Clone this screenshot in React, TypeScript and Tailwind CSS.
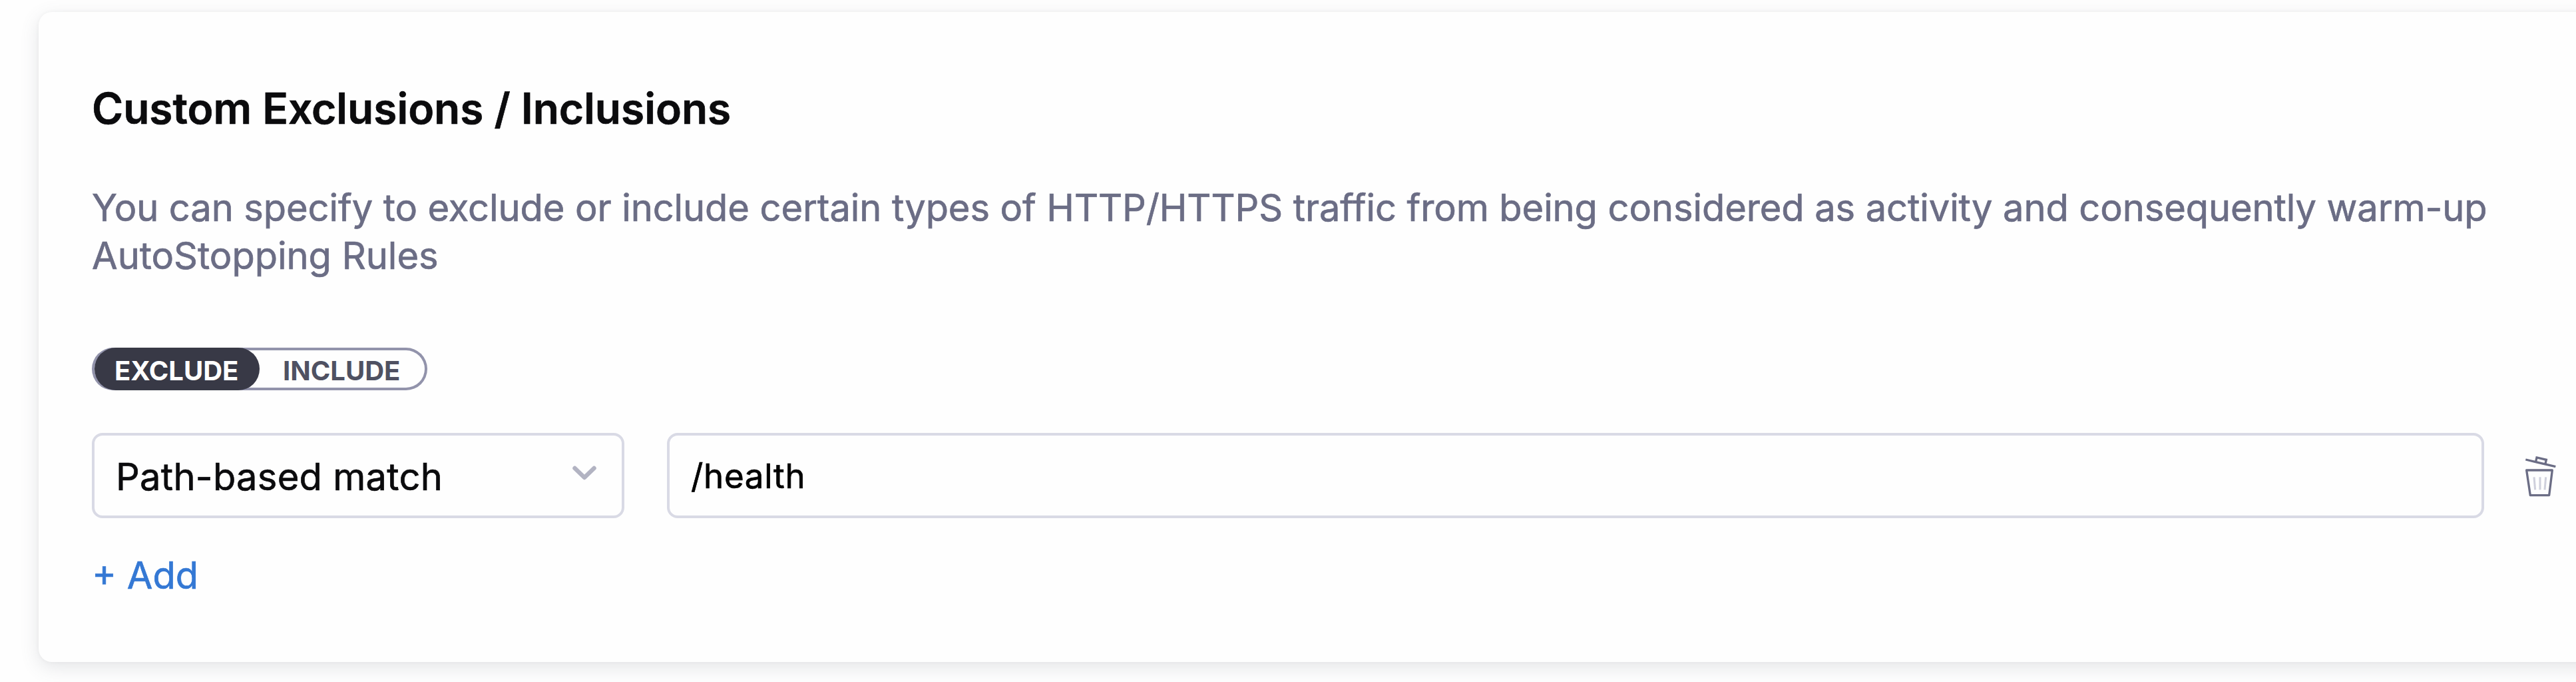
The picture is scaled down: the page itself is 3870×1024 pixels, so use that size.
function ChevronDown() {
  return (
    <svg className="-mt-[8px] h-[28px] w-[44px] shrink-0" viewBox="0 0 44 28" fill="none">
      <path d="M7.5 7 22 21 36.500 7" stroke="#b2b3c2" strokeWidth="6.500" strokeLinecap="round" strokeLinejoin="round" />
    </svg>
  );
}

function TrashIcon() {
  return (
    <svg className="h-[90px] w-[80px]" viewBox="0 0 240 270" fill="none">
      <g stroke="#6b6d85" strokeWidth="10" strokeLinejoin="round">
        <path d="M43 60 178 92" />
        <path d="M89 69 93 51 136 61 132 79" strokeLinejoin="miter" />
        <path d="M47 108H163L149 221H64Z" />
      </g>
      <g stroke="#cfd0dc" strokeWidth="9">
        <path d="M81 139 86 196" />
        <path d="M108 139V196" />
        <path d="M134 139 129 196" />
      </g>
    </svg>
  );
}

export default function App() {
  return (
    <main className="h-[1024px] w-full overflow-hidden bg-[#fefefe] pt-[18px] pl-[58px] font-[Inter,sans-serif] text-[#0b0b0d] [-webkit-text-stroke:0.7px_currentColor]">
      <section className="-mr-16 h-[976px] rounded-[20px] bg-[#fefefe] pt-[105px] pl-20 shadow-[0_0_6px_rgba(40,41,61,0.04),0_8px_28px_rgba(96,97,112,0.16)]">
        <h2 className="text-[64px] leading-[80px] font-semibold whitespace-nowrap">Custom Exclusions / Inclusions</h2>
        <p className="mt-[73px] text-[56px] leading-[72px] tracking-[-0.08px] whitespace-nowrap text-[#6b6d85]">
          You can specify to exclude or include certain types of HTTP/HTTPS traffic from being considered as activity and consequently warm-up
          <br />
          <span className="tracking-normal">AutoStopping Rules</span>
        </p>

        <div className="mt-[102px] flex h-16 w-[504px] rounded-full pl-1 text-[40px] leading-[57px] font-bold shadow-[inset_0_0_0_4px_#9293ab] [-webkit-text-stroke:0px]">
          <button className="flex w-[248px] rounded-full bg-[#383946] pt-[6px] pl-[30px] text-white">EXCLUDE</button>
          <button className="flex pt-[6px] pl-[35px] text-[#4f5162]">INCLUDE</button>
        </div>

        <div className="mt-16 flex h-32 items-center">
          <div className="flex h-32 w-[800px] items-center justify-between rounded-[16px] border-4 border-[#d9dae5] pr-[34px] pl-[32px]">
            <span className="pt-[3px] text-[56px] tracking-[0.3px]">Path-based match</span>
            <ChevronDown />
          </div>
          <div className="ml-16 flex h-32 w-[2730px] items-center rounded-[16px] border-4 border-[#d9dae5] pl-[32px]">
            <span className="pt-[2px] text-[51px] tracking-[0.7px] text-black">/health</span>
          </div>
          <button className="mt-[2px] ml-12">
            <TrashIcon />
          </button>
        </div>

        <button className="mt-[50px] block text-[56px] leading-[72px] text-[#3478d4]">+ Add</button>
      </section>
    </main>
  );
}
